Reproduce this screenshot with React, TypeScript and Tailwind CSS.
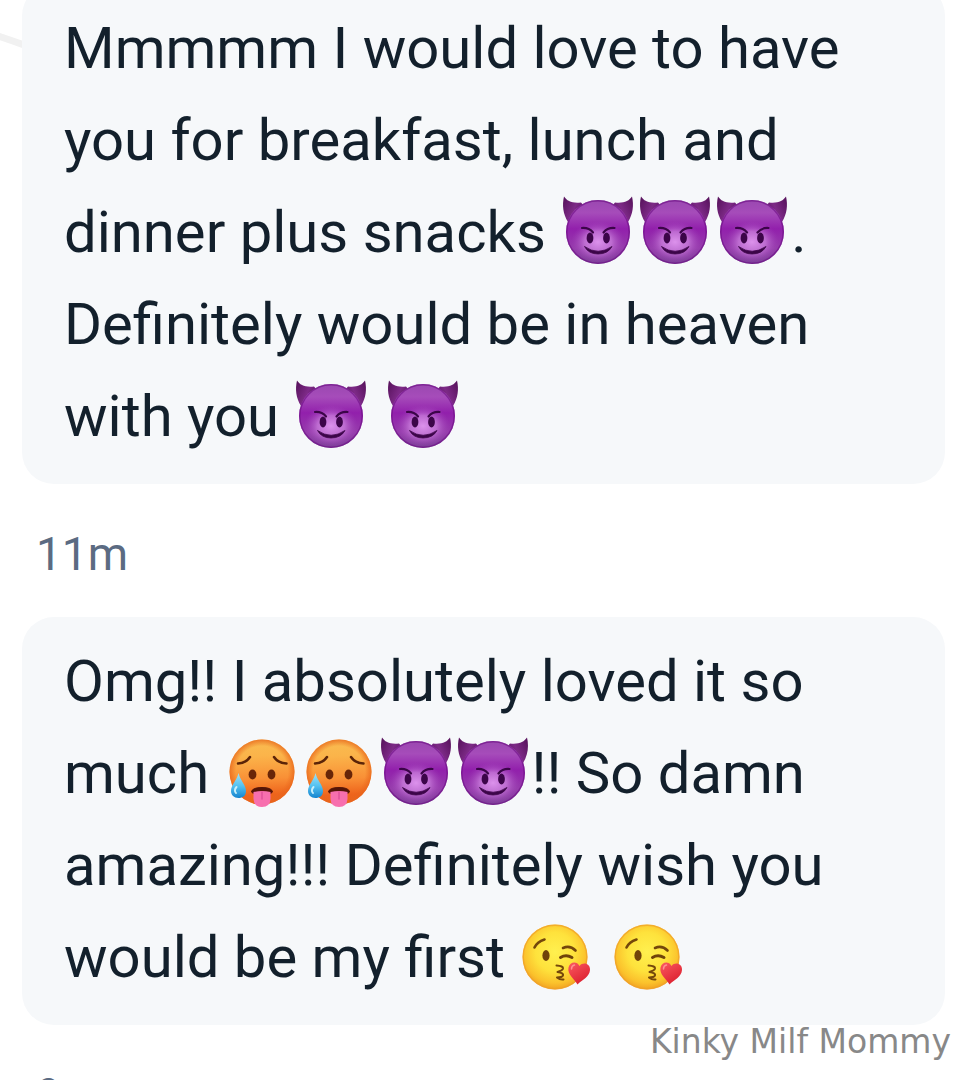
import React from "react";

const emojiClass = "inline-block h-[72px] w-[77px] align-[-16px]";

const Devil = () => (
  <svg viewBox="1 0 77 72" className={emojiClass} role="img" aria-label="Devil">
    <defs>
      <linearGradient id="devilFace" x1="0" y1="0" x2="0" y2="1">
        <stop offset="0" stopColor="#9a48b0" />
        <stop offset="0.2" stopColor="#a64cba" />
        <stop offset="0.45" stopColor="#9220ac" />
        <stop offset="0.75" stopColor="#963cac" />
        <stop offset="1" stopColor="#7a3f96" />
      </linearGradient>
      <radialGradient id="devilGlow" cx="0.5" cy="0.5" r="0.5">
        <stop offset="0" stopColor="#dc92ec" />
        <stop offset="0.5" stopColor="#cb7fdd" stopOpacity="0.75" />
        <stop offset="1" stopColor="#a044b8" stopOpacity="0" />
      </radialGradient>
      <linearGradient id="devilHorn" x1="0" y1="0" x2="1" y2="0.6">
        <stop offset="0" stopColor="#541058" />
        <stop offset="0.6" stopColor="#7d2a87" />
        <stop offset="1" stopColor="#5a1462" />
      </linearGradient>
      <linearGradient id="devilHornRight" x1="1" y1="0" x2="0" y2="0.6">
        <stop offset="0" stopColor="#541058" />
        <stop offset="0.6" stopColor="#7d2a87" />
        <stop offset="1" stopColor="#5a1462" />
      </linearGradient>
    </defs>
    <path d="M5 0.500 C8 5 13 7.500 22 6.500 L25 10 L9 26 C4 18 3 9 5 0.500Z" fill="url(#devilHorn)" />
    <path d="M73 0.500 C70 5 65 7.500 56 6.500 L53 10 L69 26 C74 18 75 9 73 0.500Z" fill="url(#devilHornRight)" />
    <circle cx="39" cy="36" r="32" fill="url(#devilFace)" />
    <circle cx="39" cy="36" r="31.2" fill="none" stroke="#6f1186" strokeWidth="1.4" opacity="0.65" />
    <ellipse cx="39" cy="46" rx="27" ry="21" fill="url(#devilGlow)" />
    <ellipse cx="31" cy="42" rx="3.4" ry="5.4" fill="#3c0549" />
    <ellipse cx="47.5" cy="42" rx="3.4" ry="5.4" fill="#3c0549" />
    <path
      d="M23 32 Q30 31.500 34 36.500 M55.500 32 Q48.500 31.500 44.500 36.500"
      fill="none"
      stroke="#3c0549"
      strokeWidth="2.2"
      strokeLinecap="round"
    />
    <path d="M25.500 50.500 Q39 60 53 50.500 Q49 58 39 58 Q29.500 58 25.500 50.500Z" fill="#3c0549" stroke="#3c0549" strokeWidth="0.8" strokeLinejoin="round" />
  </svg>
);

const HotFace = () => (
  <svg viewBox="0 -1 77 72" className={emojiClass} role="img" aria-label="Hot face">
    <defs>
      <linearGradient id="hotFace" x1="0.5" y1="0" x2="0.55" y2="1">
        <stop offset="0" stopColor="#f9bb50" />
        <stop offset="0.25" stopColor="#fbb44a" />
        <stop offset="0.6" stopColor="#f99036" />
        <stop offset="0.85" stopColor="#ee641c" />
        <stop offset="1" stopColor="#e8641e" />
      </linearGradient>
      <radialGradient id="hotEdge" cx="0.5" cy="0.5" r="0.5">
        <stop offset="0.8" stopColor="#e9661c" stopOpacity="0" />
        <stop offset="1" stopColor="#e8641a" stopOpacity="0.75" />
      </radialGradient>
      <linearGradient id="sweat" x1="0" y1="0" x2="0" y2="1">
        <stop offset="0" stopColor="#a4e2f5" />
        <stop offset="0.5" stopColor="#56c3f1" />
        <stop offset="1" stopColor="#1484cf" />
      </linearGradient>
    </defs>
    <circle cx="38" cy="34" r="32.5" fill="url(#hotFace)" />
    <circle cx="38" cy="34" r="32.5" fill="url(#hotEdge)" />
    <path
      d="M14 25.500 Q22 25 26 19 M50 19 Q54 25 62.500 25.500"
      fill="none"
      stroke="#5b2408"
      strokeWidth="2.5"
      strokeLinecap="round"
    />
    <ellipse cx="28.5" cy="36.5" rx="3.9" ry="4.9" fill="#682508" />
    <ellipse cx="47.5" cy="36.5" rx="3.9" ry="4.9" fill="#682508" />
    <path d="M27.500 54 Q28 49.500 38 49.500 Q48 49.500 48.500 54 Q48 56 44 54.500 L32 54.500 Q28 56 27.500 54Z" fill="#551507" stroke="#551507" strokeWidth="1" />
    <path d="M29.500 54 Q38 52 46.500 54 L46.500 61 Q46 69 38 69 Q30 69 29.500 61Z" fill="#f76fae" />
    <path d="M38 54 V61" stroke="#e0529a" strokeWidth="1.5" strokeLinecap="round" />
    <path d="M14.500 35 C16 42 22 47 22 53 C22 58 18.500 60 14.500 60 C10 60 7 57 7 53 C7 47 13 42 14.500 35Z" fill="url(#sweat)" />
    <path d="M12.500 49 C10.500 51 10.500 54 12 55" fill="none" stroke="#c8effb" strokeWidth="2" strokeLinecap="round" />
  </svg>
);

const Kiss = () => (
  <svg viewBox="2 -2 77 72" className={emojiClass} role="img" aria-label="Blowing a kiss">
    <defs>
      <radialGradient id="kissFace" cx="0.5" cy="0.42" r="0.6">
        <stop offset="0" stopColor="#fff04f" />
        <stop offset="0.5" stopColor="#fee23c" />
        <stop offset="0.8" stopColor="#fbc22c" />
        <stop offset="1" stopColor="#ef9c20" />
      </radialGradient>
      <linearGradient id="heart" x1="0" y1="0" x2="0.6" y2="1">
        <stop offset="0" stopColor="#fb5a61" />
        <stop offset="1" stopColor="#dc202f" />
      </linearGradient>
    </defs>
    <circle cx="38" cy="34" r="32.5" fill="url(#kissFace)" />
    <circle cx="38" cy="34" r="31.8" fill="none" stroke="#efa02a" strokeWidth="1.4" opacity="0.7" />
    <path d="M17.500 24.500 Q20 19 27.500 16.500" fill="none" stroke="#74470b" strokeWidth="2.6" strokeLinecap="round" />
    <path d="M46 25 Q53 22 58.500 27.500" fill="none" stroke="#74470b" strokeWidth="2.6" strokeLinecap="round" />
    <ellipse cx="29" cy="32.5" rx="3.6" ry="5.4" fill="#70430a" />
    <path d="M43.500 34.500 Q49 31 55 34.500" fill="none" stroke="#70430a" strokeWidth="3" strokeLinecap="round" />
    <path
      d="M39.500 42.500 Q46.500 43 46 45.500 Q45.500 47.500 40.500 49 Q47 50 46 52.500 Q45 54.500 40 54.500 Q43 57 46.500 56.500"
      fill="none"
      stroke="#74470b"
      strokeWidth="2"
      strokeLinecap="round"
      strokeLinejoin="round"
    />
    <path
      d="M60.500 61.500 C57.500 56 50 51.500 51.500 44.500 C53 38.500 60 38 62.500 43 C66 38.500 73.500 40.500 73 47 C72.500 54 65 57 60.500 61.500Z"
      fill="url(#heart)"
    />
    <path d="M54.500 46 Q54.500 42.500 57.500 42" fill="none" stroke="#ff8f92" strokeWidth="1.5" strokeLinecap="round" />
  </svg>
);

interface MessageProps {
  children: React.ReactNode;
}

const Message: React.FC<MessageProps> = ({ children }) => (
  <p className="rounded-[32px] bg-[#f6f8fa] px-[42px] pt-[18px] pb-[22px] text-[58px] leading-[92px] text-[#13202c]">
    {children}
  </p>
);

const Timestamp: React.FC<MessageProps> = ({ children }) => (
  <time className="block pt-[42px] pb-[34px] pl-[14px] text-[46px] leading-[57px] text-[#5b6b82]">
    {children}
  </time>
);

const App: React.FC = () => {
  return (
    <main className="relative h-screen overflow-hidden bg-white font-['Roboto',sans-serif]">
      <svg viewBox="0 0 24 50" className="absolute top-0 left-0 h-[50px] w-6" aria-hidden="true">
        <path d="M-2 36 Q10 40 24 45" fill="none" stroke="#f1f1f1" strokeWidth="7" />
      </svg>

      <div className="relative -mt-4 mr-6 ml-[22px]">
        <Message>
          Mmmmm I would love to have you for breakfast, lunch and dinner plus
          snacks <Devil />
          <Devil />
          <Devil />. Definitely would be in heaven with you <Devil /> <Devil />
        </Message>
        <Timestamp>11m</Timestamp>
        <Message>
          Omg!! I absolutely loved it so much <HotFace />
          <HotFace />
          <Devil />
          <Devil />
          !! So damn amazing!!! Definitely wish you would be my first <Kiss />{" "}
          <Kiss />
        </Message>
        <Timestamp>9m</Timestamp>
      </div>

      <span className="absolute right-[18px] bottom-4 font-['DejaVu_Sans',sans-serif] text-[33px] leading-[44px] text-[#888888]">
        Kinky Milf Mommy
      </span>
    </main>
  );
};

export default App;
